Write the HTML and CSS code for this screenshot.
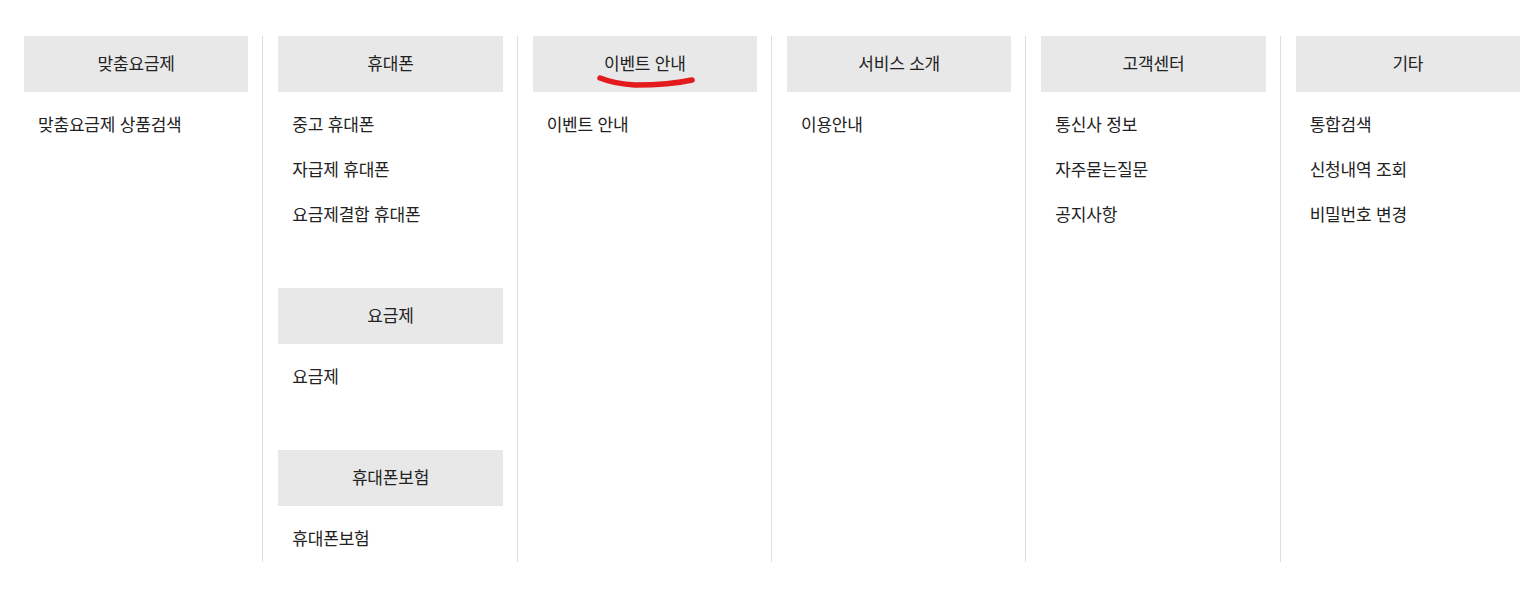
FILE: index.html
```html
<!DOCTYPE html>
<html lang="ko">
  <head>
    <meta charset="UTF-8" />
    <meta name="viewport" content="width=device-width, initial-scale=1.0" />
    <title>전체메뉴</title>
    <link rel="stylesheet" href="styles.css">
  </head>
  <body>
    <div class="sitemap">
      <div class="col">
        <div class="group">
          <h3 class="group-title">맞춤요금제</h3>
          <ul class="menu">
            <li>맞춤요금제 상품검색</li>
          </ul>
        </div>
      </div>
      <div class="col">
        <div class="group">
          <h3 class="group-title">휴대폰</h3>
          <ul class="menu">
            <li>중고 휴대폰</li>
            <li>자급제 휴대폰</li>
            <li>요금제결합 휴대폰</li>
          </ul>
        </div>
        <div class="group">
          <h3 class="group-title">요금제</h3>
          <ul class="menu">
            <li>요금제</li>
          </ul>
        </div>
        <div class="group">
          <h3 class="group-title">휴대폰보험</h3>
          <ul class="menu">
            <li>휴대폰보험</li>
          </ul>
        </div>
      </div>
      <div class="col">
        <div class="group">
          <h3 class="group-title">이벤트 안내
            <svg class="scribble" width="104" height="18" viewBox="0 0 104 18">
              <path d="M5 6 Q 20 12 40 13 Q 75 13 97 8" fill="none" stroke="#e31b1f" stroke-width="5.5" stroke-linecap="round" />
            </svg>
          </h3>
          <ul class="menu">
            <li>이벤트 안내</li>
          </ul>
        </div>
      </div>
      <div class="col">
        <div class="group">
          <h3 class="group-title">서비스 소개</h3>
          <ul class="menu">
            <li>이용안내</li>
          </ul>
        </div>
      </div>
      <div class="col">
        <div class="group">
          <h3 class="group-title">고객센터</h3>
          <ul class="menu">
            <li>통신사 정보</li>
            <li>자주묻는질문</li>
            <li>공지사항</li>
          </ul>
        </div>
      </div>
      <div class="col">
        <div class="group">
          <h3 class="group-title">기타</h3>
          <ul class="menu">
            <li>통합검색</li>
            <li>신청내역 조회</li>
            <li>비밀번호 변경</li>
          </ul>
        </div>
      </div>
    </div>
  </body>
</html>
```

FILE: styles.css
```css
body {
  margin: 0;
  padding: 36px 6px 0 8px;
  background: #fff;
  font-family: "Noto Sans CJK KR", "Noto Sans", sans-serif;
  color: #222;
}

.sitemap {
  display: grid;
  grid-template-columns: repeat(6, 1fr);
}

.col {
  border-left: 1px solid #dedede;
  padding: 0 14px 2px 15px;
}

.col:first-child {
  border-left-color: transparent;
}

.group {
  margin-bottom: 52px;
}

.group:last-child {
  margin-bottom: 0;
}

.group-title {
  position: relative;
  margin: 0;
  height: 56px;
  line-height: 54px;
  background: #e8e8e8;
  text-align: center;
  font-size: 17px;
  font-weight: normal;
  letter-spacing: -0.2px;
  color: #222;
}

.scribble {
  position: absolute;
  left: 62px;
  top: 36px;
}

.menu {
  list-style: none;
  margin: 0;
  padding: 9px 0 0;
}

.menu li {
  height: 45px;
  line-height: 45px;
  padding-left: 14px;
  font-size: 17px;
  letter-spacing: -0.2px;
  color: #222;
}
```
